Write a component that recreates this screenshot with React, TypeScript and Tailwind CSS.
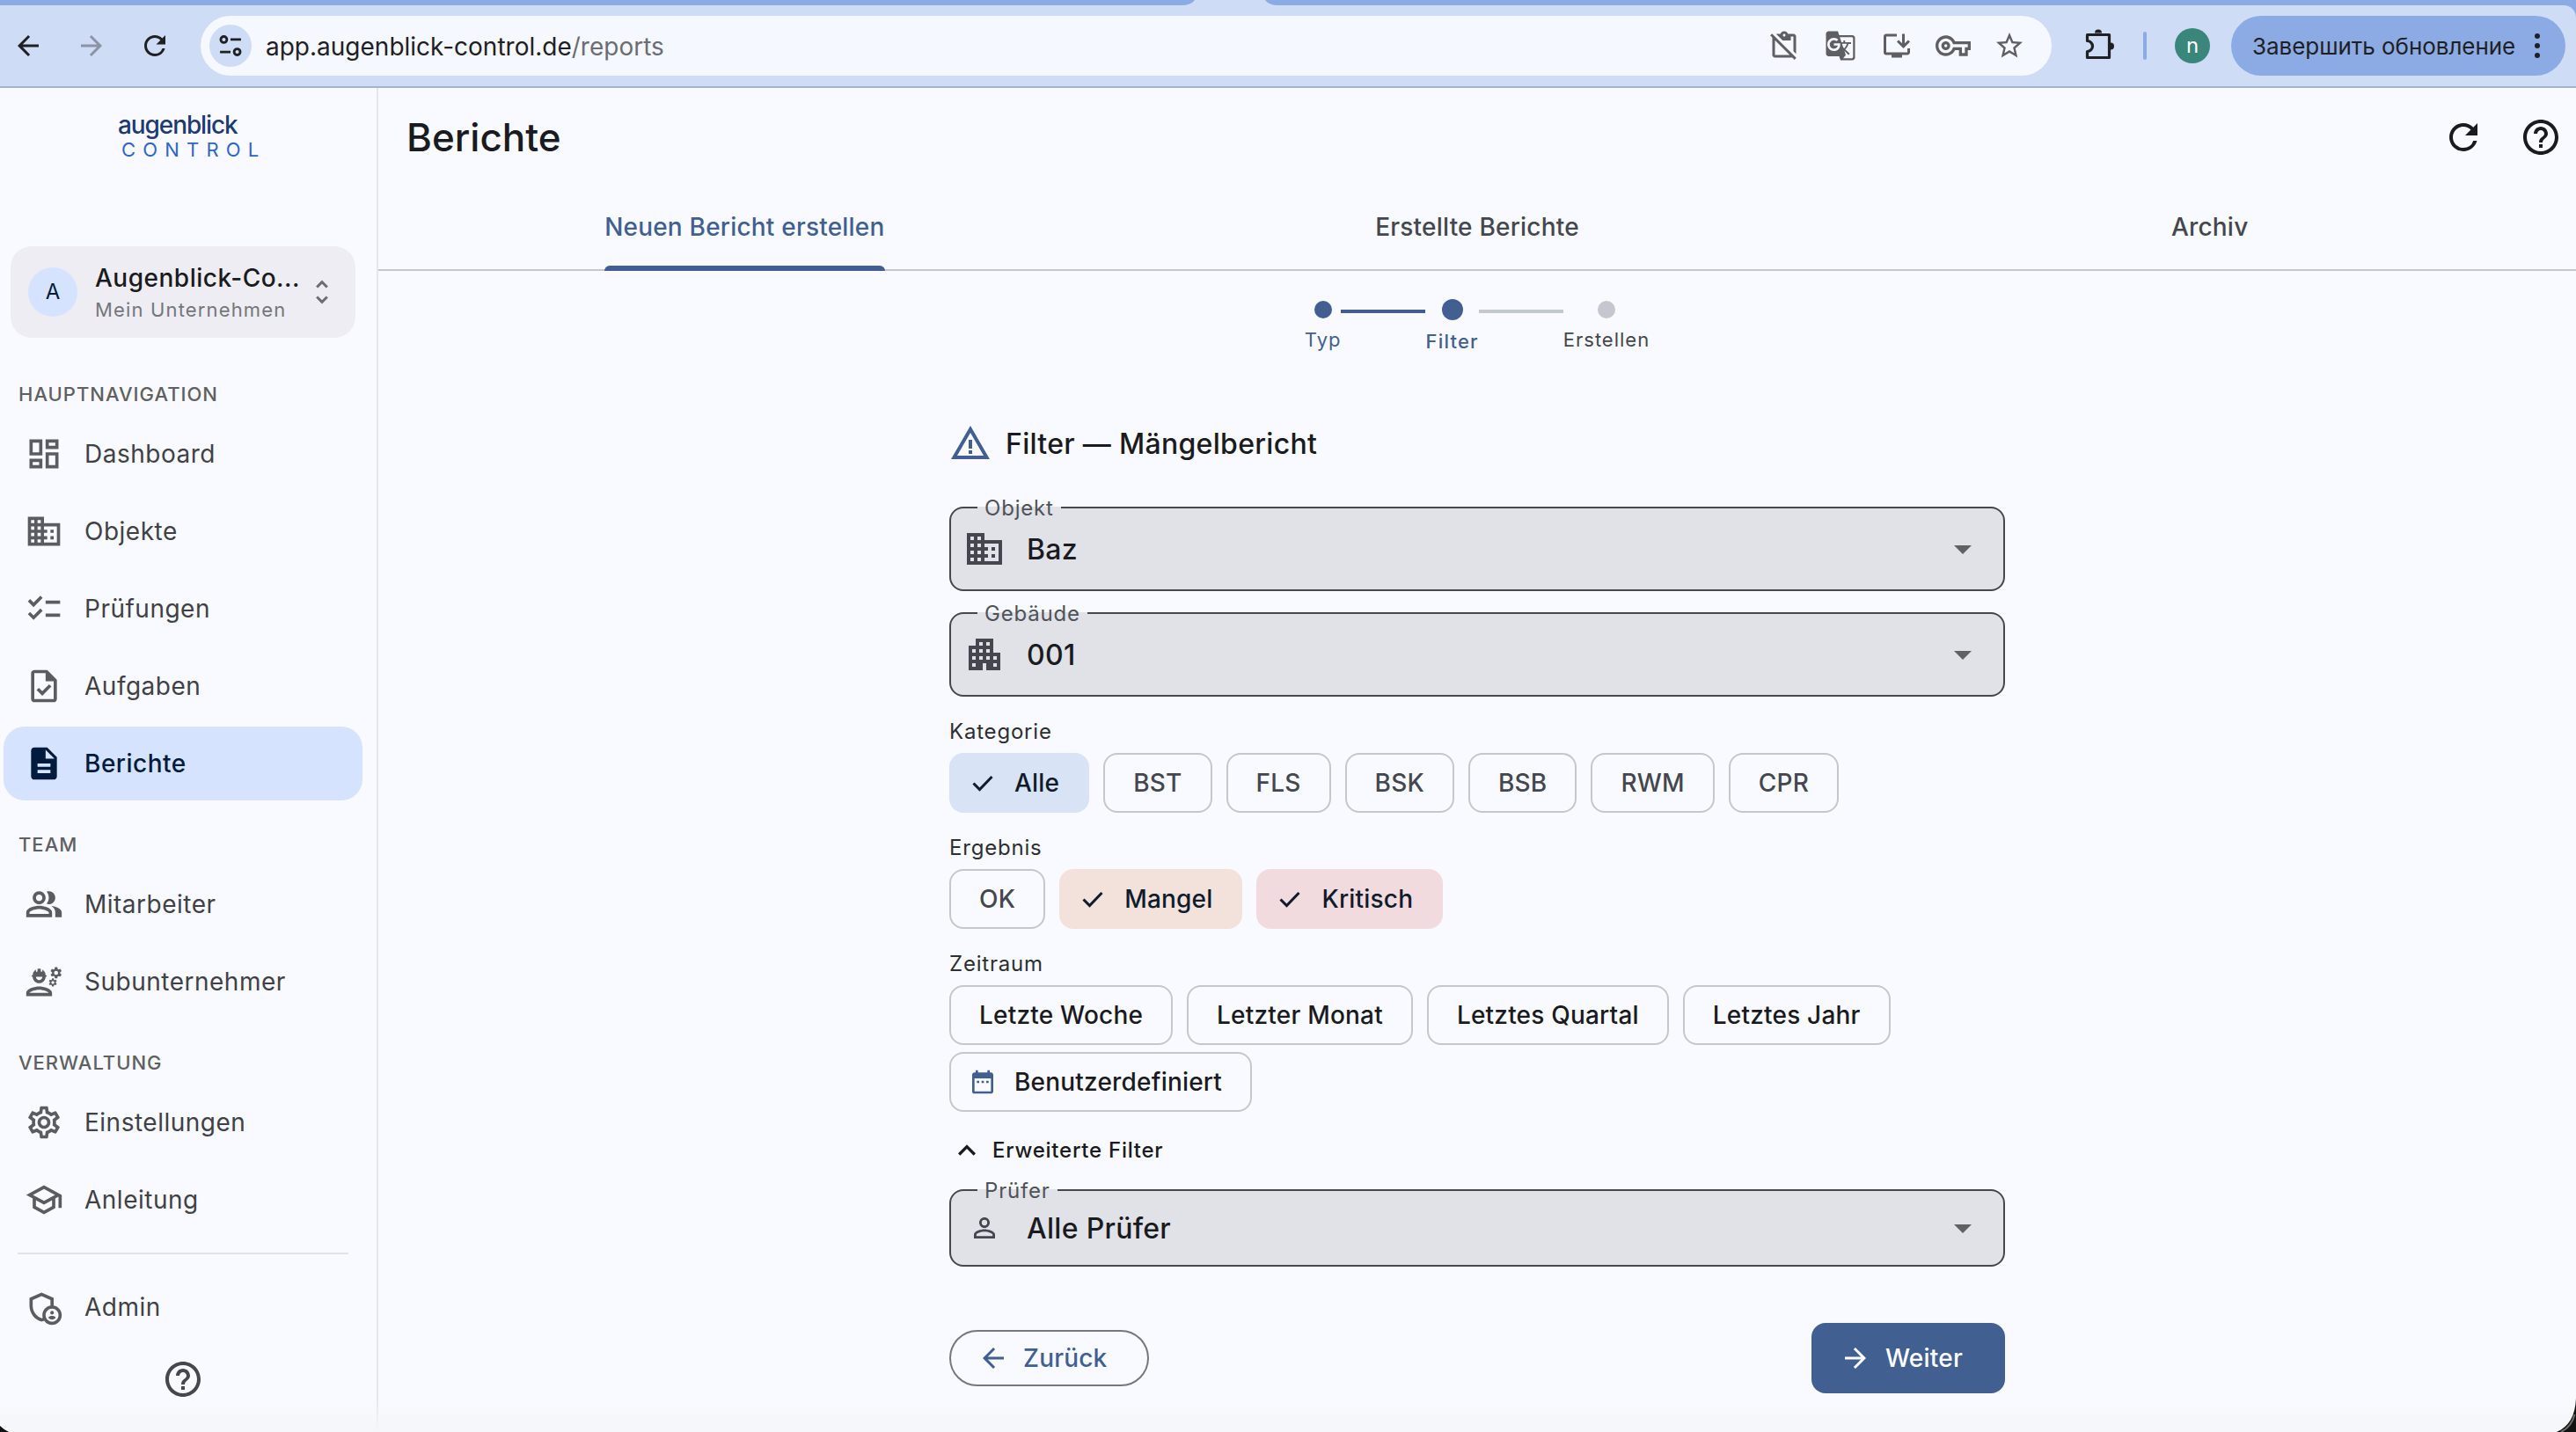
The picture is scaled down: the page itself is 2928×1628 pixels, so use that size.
import React from "react";
import {
  MdOutlineDashboard, MdBusiness, MdChecklist, MdOutlineTask, MdDescription, MdOutlinePeopleAlt,
  MdOutlineEngineering, MdOutlineSettings, MdOutlineSchool, MdOutlineAdminPanelSettings, MdHelpOutline,
  MdRefresh, MdApartment, MdPersonOutline, MdArrowDropDown, MdWarningAmber, MdArrowBack,
  MdArrowForward, MdDateRange, MdGTranslate, MdOutlineVpnKey, MdStarBorder,
  MdExpandLess, MdUnfoldMore, MdContentPasteOff, MdInstallDesktop,
} from "react-icons/md";

type Icon = React.ComponentType<{ className?: string }>;

function BrowserBar() {
  return (
    <header className="h-[100px] w-full shrink-0 bg-[#8CABE4]">
      <div className="flex h-[6px] pl-[1342px]">
        <svg viewBox="0 0 112 6" className="h-[6px] w-28" fill="#CFDCF6">
          <path d="M0 6C8 6 13 4 16 0H96C99 4 104 6 112 6Z" />
        </svg>
      </div>
      <div className="flex h-[94px] items-center rounded-tr-[14px] border-b-2 border-[#A6B3CD] bg-[#CFDCF6] pr-3 pl-[14px]">
        <MdArrowBack className="size-9 text-[#1f2023]" />
        <MdArrowForward className="ml-9 size-9 text-[#8b93a5]" />
        <MdRefresh className="ml-9 size-9 text-[#1f2023]" />
        <div className="ml-[34px] flex h-[68px] w-[2104px] items-center rounded-full bg-[#F5F8FE] pr-[30px] pl-[10px]">
          <div className="flex size-12 items-center justify-center rounded-full bg-[#CFDCF6]">
            <svg viewBox="0 0 24 24" className="size-[26px]" fill="none" stroke="#1f2023" strokeWidth="2.6">
              <circle cx="5" cy="5.5" r="3.2" />
              <path d="M12 5.5h11M1 18.5h11" />
              <circle cx="19" cy="18.5" r="3.2" />
            </svg>
          </div>
          <div className="mt-px ml-4 text-[28px] whitespace-nowrap text-[#1f2023]">
            app.augenblick-control.de<span className="text-[#6a6d73]">/reports</span>
          </div>
          <div className="ml-auto flex items-center gap-[26px] text-[#5d5f63]">
            <MdContentPasteOff className="size-9" />
            <MdGTranslate className="ml-[2px] size-9" />
            <MdInstallDesktop className="ml-[2px] size-9" />
            <MdOutlineVpnKey className="size-10" />
            <MdStarBorder className="size-9" />
          </div>
        </div>
        <svg viewBox="0 0 38 38" className="ml-[34px] size-[38px] shrink-0" fill="none" stroke="#1f2023" strokeWidth="3.2" strokeLinejoin="round">
          <path d="M6.500 6.500H31.500V32.500H6.500V25.500A6 6 0 0 0 6.500 13.500Z" />
          <path d="M15 4.500a4 4 0 0 1 8 0ZM33 15.500a4 4 0 0 1 0 8Z" fill="#1f2023" stroke="none" />
        </svg>
        <div className="ml-[32px] h-8 w-1 rounded-full bg-[#8CABE4]" />
        <div className="ml-8 flex size-10 items-center justify-center rounded-full bg-[#3A867A] text-[24px] text-white">n</div>
        <div className="ml-6 flex h-[68px] w-[380px] shrink-0 items-center rounded-full bg-[#8CABE4] pl-6">
          <span className="mt-px w-[299px] shrink-0 text-[26px] tracking-[-0.05px] whitespace-nowrap text-[#1f2023]">Завершить обновление</span>
          <div className="ml-[22px] flex w-[6px] shrink-0 flex-col items-center gap-[5px]">
            <i className="size-[6px] rounded-full bg-[#1f2023]" />
            <i className="size-[6px] rounded-full bg-[#1f2023]" />
            <i className="size-[6px] rounded-full bg-[#1f2023]" />
          </div>
        </div>
      </div>
    </header>
  );
}

function NavItem({ icon: I, label, active }: { icon: Icon; label: string; active?: boolean }) {
  return (
    <div className={"ml-1 mb-1 flex h-[84px] w-[408px] items-center rounded-[24px] pl-6 " + (active ? "bg-[#D6E3FF] text-[#001B3D]" : "text-[#5A5C61]")}>
      <I className="size-11 shrink-0" />
      <span className={"ml-6 text-[28px] whitespace-nowrap " + (active ? "font-medium tracking-[0.5px]" : "tracking-[0.5px] text-[#3f4147]")}>{label}</span>
    </div>
  );
}

function NavLabel({ children, first }: { children: string; first?: boolean }) {
  return (
    <div className={"flex h-8 items-center pl-[21px] text-[22px] font-medium tracking-[1px] text-[#5F6062] mb-[10px] " + (first ? "mt-12" : "mt-[30px]")}>
      {children}
    </div>
  );
}

function Sidebar() {
  return (
    <aside className="flex w-[430px] shrink-0 flex-col border-r-2 border-[#E5E6EC]">
      <div className="h-[180px] shrink-0 pt-[24px] pl-[134px]">
        <div className="text-[28px] leading-[36px] font-medium tracking-[-1.1px] text-[#1E3A70]">augenblick</div>
        <div className="-mt-px pl-1 text-[22px] leading-[22px] tracking-[8.2px] text-[#2F66C4]">CONTROL</div>
      </div>
      <div className="ml-3 flex h-[104px] w-[392px] shrink-0 items-center rounded-[24px] bg-[#EEEDF3] pl-5">
        <div className="flex size-14 items-center justify-center rounded-full bg-[#D6E3FF] text-[24px] text-[#001B3D]">A</div>
        <div className="ml-5 w-[236px]">
          <div className="text-[28px] leading-[38px] font-medium tracking-[0.5px] whitespace-nowrap text-[#1A1B20]">Augenblick-Co...</div>
          <div className="mt-px text-[22px] leading-[32px] tracking-[1.15px] whitespace-nowrap text-[#74767B]">Mein Unternehmen</div>
        </div>
        <MdUnfoldMore className="ml-1 size-9 text-[#6b6d72]" />
      </div>
      <NavLabel first>HAUPTNAVIGATION</NavLabel>
      <NavItem icon={MdOutlineDashboard} label="Dashboard" />
      <NavItem icon={MdBusiness} label="Objekte" />
      <NavItem icon={MdChecklist} label="Prüfungen" />
      <NavItem icon={MdOutlineTask} label="Aufgaben" />
      <NavItem icon={MdDescription} label="Berichte" active />
      <NavLabel>TEAM</NavLabel>
      <NavItem icon={MdOutlinePeopleAlt} label="Mitarbeiter" />
      <NavItem icon={MdOutlineEngineering} label="Subunternehmer" />
      <NavLabel>VERWALTUNG</NavLabel>
      <NavItem icon={MdOutlineSettings} label="Einstellungen" />
      <NavItem icon={MdOutlineSchool} label="Anleitung" />
      <div className="mt-[14px] mb-[18px] ml-5 h-[2px] w-[376px] shrink-0 bg-[#E1E2E8]" />
      <NavItem icon={MdOutlineAdminPanelSettings} label="Admin" />
      <MdHelpOutline className="mt-[12px] ml-[184px] size-12 shrink-0 text-[#44474E]" />
    </aside>
  );
}

function Tab({ label, active }: { label: string; active?: boolean }) {
  return (
    <div className="flex flex-1 justify-center">
      <div className={"relative flex h-full items-center pb-[2px] text-[28px] font-medium tracking-[0.2px] " + (active ? "text-[#415F91]" : "text-[#44474E]")}>
        {label}
        {active && <div className="absolute inset-x-0 -bottom-[2px] h-[6px] rounded-t-[6px] bg-[#415F91]" />}
      </div>
    </div>
  );
}

function Step({ label, state }: { label: string; state: "done" | "current" | "todo" }) {
  const dot = { done: "size-5 bg-[#415F91]", current: "size-6 bg-[#415F91]", todo: "size-5 bg-[#C4C6D0]" }[state];
  const text = { done: "text-[#415F91] tracking-[1px]", current: "text-[#415F91] font-medium tracking-[1.2px]", todo: "text-[#44474E] tracking-[1px]" }[state];
  return (
    <div className="flex flex-col items-center">
      <div className={"rounded-full " + dot} />
      <div className={"mt-2 text-[22px] leading-[32px] " + text}>{label}</div>
    </div>
  );
}

function Field({ label, value, icon: I, small }: { label: string; value: string; icon: Icon; small?: boolean }) {
  return (
    <div className={"relative flex w-[1200px] shrink-0 items-center rounded-2xl border-2 border-[#44474E] bg-[#E1E2E8] pr-[22px] pl-[14px] " + (small ? "h-[88px]" : "h-24")}>
      <div className="absolute -top-[2px] left-[30px] flex h-[2px] items-center bg-[#E1E2E8] px-2">
        <span className="mt-[2px] text-[24px] tracking-[0.8px] text-[#505259]">{label}</span>
      </div>
      <div className="flex size-12 items-center justify-center">
        <I className={"text-[#44474E] " + (small ? "size-9" : "size-12")} />
      </div>
      <span className="mt-[2px] ml-6 text-[32px] font-medium tracking-[0.3px] text-[#1A1B20]">{value}</span>
      <MdArrowDropDown className="ml-auto size-12 text-[#5F6165]" />
    </div>
  );
}

function Check() {
  return (
    <svg viewBox="0 0 36 36" className="mr-[18px] -ml-[14px] size-9" fill="none" stroke="currentColor" strokeWidth="3">
      <path d="M7.5 18.5l7 7L28.5 11" />
    </svg>
  );
}

function Chip({ label, fill, dark, date }: { label: string; fill?: string; dark?: boolean; date?: boolean }) {
  return (
    <div className={"flex h-[68px] items-center rounded-2xl text-[28px] font-medium tracking-[0.2px] whitespace-nowrap " + (fill ? fill + " px-[34px] text-[#101c2b]" : dark ? "border-2 border-[#C4C6D0] px-8 text-[#1A1B20]" : "border-2 border-[#C4C6D0] px-8 text-[#44474E]")}>
      {fill && <Check />}
      {date && <MdDateRange className="mr-5 -ml-3 size-8 text-[#415F91]" />}
      {label}
    </div>
  );
}

function Caption({ children }: { children: string }) {
  return <div className="h-8 text-[24px] leading-[32px] tracking-[0.8px] text-[#2c2e33]">{children}</div>;
}

function Main() {
  return (
    <main className="flex flex-1 flex-col">
      <div className="flex h-[112px] shrink-0 items-center pr-4 pl-8">
        <h1 className="text-[44px] font-medium text-[#1A1B20]">Berichte</h1>
        <MdRefresh className="ml-auto size-12 text-[#1A1B20]" />
        <MdHelpOutline className="ml-10 size-12 text-[#1A1B20]" />
      </div>
      <nav className="flex h-24 shrink-0 border-b-2 border-[#C4C6D0]">
        <Tab label="Neuen Bericht erstellen" active />
        <Tab label="Erstellte Berichte" />
        <Tab label="Archiv" />
      </nav>
      <div className="mt-8 flex h-16 items-center justify-center">
        <Step label="Typ" state="done" />
        <div className="mb-9 h-1 w-24 bg-[#415F91]" />
        <Step label="Filter" state="current" />
        <div className="mb-9 h-1 w-24 bg-[#C4C6D0]" />
        <Step label="Erstellen" state="todo" />
      </div>
      <div className="mx-auto flex w-[1200px] flex-col">
        <div className="mt-[76px] flex h-12 items-center">
          <MdWarningAmber className="size-12 text-[#415F91]" />
          <h2 className="mt-px ml-4 text-[32px] font-medium tracking-[0.3px] text-[#1A1B20]">Filter — Mängelbericht</h2>
        </div>
        <div className="mt-12 flex flex-col gap-6">
          <Field label="Objekt" value="Baz" icon={MdBusiness} />
          <Field label="Gebäude" value="001" icon={MdApartment} />
        </div>
        <div className="mt-6"><Caption>Kategorie</Caption></div>
        <div className="mt-2 flex gap-4">
          <Chip label="Alle" fill="bg-[#D8E3F6]" />
          <Chip label="BST" />
          <Chip label="FLS" />
          <Chip label="BSK" />
          <Chip label="BSB" />
          <Chip label="RWM" />
          <Chip label="CPR" />
        </div>
        <div className="mt-6"><Caption>Ergebnis</Caption></div>
        <div className="mt-2 flex gap-4">
          <Chip label="OK" />
          <Chip label="Mangel" fill="bg-[#F2E2DB]" />
          <Chip label="Kritisch" fill="bg-[#F1DBDE]" />
        </div>
        <div className="mt-6"><Caption>Zeitraum</Caption></div>
        <div className="mt-2 flex flex-wrap gap-x-4 gap-y-2">
          <Chip label="Letzte Woche" dark />
          <Chip label="Letzter Monat" dark />
          <Chip label="Letztes Quartal" dark />
          <Chip label="Letztes Jahr" dark />
          <Chip label="Benutzerdefiniert" dark date />
        </div>
        <div className="mt-7 flex h-8 items-center">
          <MdExpandLess className="size-10 text-[#1A1B20]" />
          <span className="ml-[9px] text-[24px] font-medium tracking-[0.75px] text-[#1A1B20]">Erweiterte Filter</span>
        </div>
        <div className="mt-7"><Field label="Prüfer" value="Alle Prüfer" icon={MdPersonOutline} small /></div>
        <div className="mt-16 flex h-20 items-center justify-between">
          <button className="flex h-16 w-[227px] items-center rounded-full border-2 border-[#74777F] pl-[30px] text-[28px] font-medium tracking-[0.2px] text-[#415F91]">
            <MdArrowBack className="mr-4 size-9" />
            Zurück
          </button>
          <button className="flex h-20 w-[220px] items-center rounded-2xl bg-[#415F91] pl-8 text-[28px] font-medium tracking-[0.2px] text-white">
            <MdArrowForward className="mr-4 size-9" />
            Weiter
          </button>
        </div>
      </div>
    </main>
  );
}

export default function App() {
  return (
    <div className="relative flex h-[1628px] w-[2928px] flex-col overflow-hidden bg-[#F9FAFF] font-['Inter',sans-serif]">
      <BrowserBar />
      <div className="flex min-h-0 flex-1">
        <Sidebar />
        <Main />
      </div>
      <div className="pointer-events-none absolute inset-x-0 bottom-0 h-10 bg-linear-to-b from-transparent to-[#F5F6FA]" />
      <svg viewBox="0 0 22 38" className="absolute bottom-0 left-0 h-[38px] w-[22px]">
        <path d="M0 31Q4 35 10 38H0Z" fill="#111" />
      </svg>
      <svg viewBox="0 0 22 38" className="absolute right-0 bottom-0 h-[38px] w-[22px]">
        <path d="M22 0C21 20 14 32 0 38H22Z" fill="#111" />
        <path d="M20.500 18C18 28 13 34 5 38" fill="none" stroke="#6b6b6b" strokeWidth="2" />
      </svg>
    </div>
  );
}
